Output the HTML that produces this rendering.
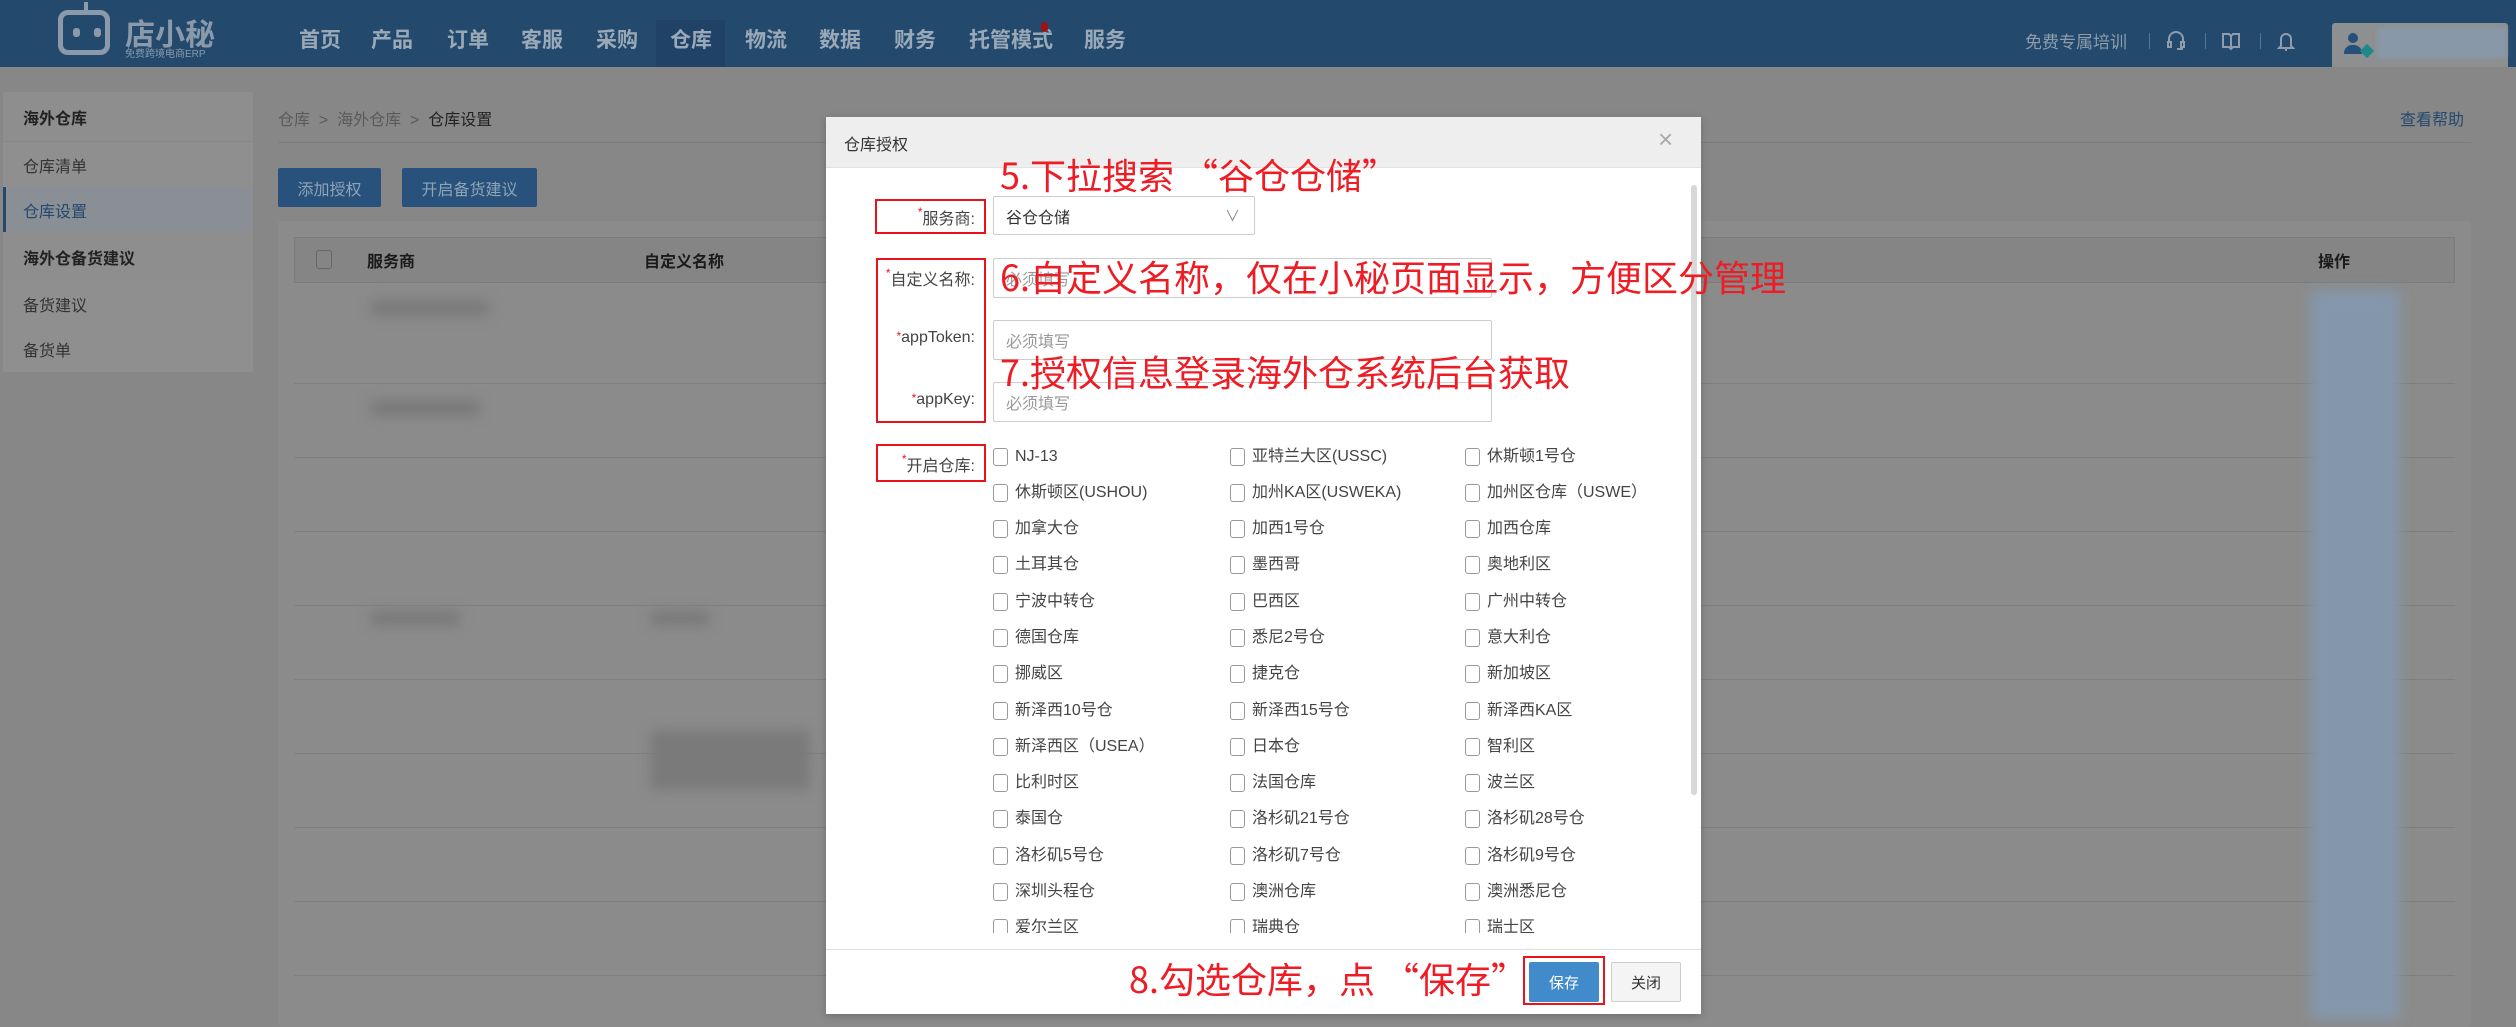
<!DOCTYPE html>
<html><head><meta charset="utf-8"><style>
*{margin:0;padding:0;box-sizing:border-box}
body{width:2516px;height:1027px;overflow:hidden;background:#878787;font-family:"Liberation Sans","Noto Sans CJK SC",sans-serif;position:relative;color:#333}
.a{position:absolute}
.nav{top:24px;font-size:21px;color:#9aa9b8;font-weight:bold}
.sb div{position:absolute;left:0;width:250px;padding-left:20px;font-size:16px;display:flex;align-items:center}
.cb{position:absolute;font-size:16px;color:#444;display:flex;align-items:center;white-space:nowrap;height:22px;line-height:22px}
.cb i{display:inline-block;width:15px;height:18px;border:1.5px solid #999;border-radius:3px;margin-right:7px}
.red{position:absolute;border:2px solid #e8141c}
.ann{position:absolute;color:#ee1c24;font-size:36px;white-space:nowrap;line-height:1;font-family:"Noto Sans CJK SC","Liberation Sans",sans-serif}
.inp{position:absolute;border:1px solid #ccc;border-radius:2px;background:#fff;font-size:16px;color:#999;padding-left:12px;display:flex;align-items:center}
.lbl{position:absolute;font-size:16px;color:#444;text-align:right;width:100px}
.lbl b{color:#e8141c;font-weight:normal;font-size:12px;vertical-align:top}
.row{position:absolute;left:294px;width:2161px;height:1px;background:#7f7f7f}
.blob{position:absolute;background:#7a7a7a;filter:blur(6px);border-radius:6px}
</style></head><body>
<div class="a" style="left:0;top:0;width:2516px;height:67px;background:#23496d"></div>
<div class="a" style="left:58px;top:10px;width:52px;height:45px;border:5px solid #8a9aab;border-radius:10px"></div>
<div class="a" style="left:84px;top:2px;width:4px;height:10px;background:#8a9aab"></div>
<div class="a" style="left:73px;top:28px;width:7px;height:9px;background:#8a9aab;border-radius:3px"></div>
<div class="a" style="left:94px;top:28px;width:7px;height:9px;background:#8a9aab;border-radius:3px"></div>
<div class="a" style="left:125px;top:10px;font-size:30px;color:#8a9aab;font-weight:bold">店小秘</div>
<div class="a" style="left:125px;top:45px;font-size:10px;color:#8a9aab">免费跨境电商ERP</div>
<div class="a" style="left:656px;top:20px;width:69px;height:47px;background:#1f4266"></div>
<div class="a nav" style="left:299px">首页</div>
<div class="a nav" style="left:371px">产品</div>
<div class="a nav" style="left:447px">订单</div>
<div class="a nav" style="left:521px">客服</div>
<div class="a nav" style="left:596px">采购</div>
<div class="a nav" style="left:670px">仓库</div>
<div class="a nav" style="left:745px">物流</div>
<div class="a nav" style="left:819px">数据</div>
<div class="a nav" style="left:894px">财务</div>
<div class="a nav" style="left:969px">托管模式</div>
<div class="a" style="left:1041px;top:22px;width:7px;height:10px;border-radius:4px;background:#a01018"></div>
<div class="a nav" style="left:1084px">服务</div>
<div class="a" style="left:2025px;top:28px;font-size:17px;color:#8e9cab">免费专属培训</div>
<div class="a" style="left:2149px;top:33px;width:1px;height:16px;background:#5a7590"></div>
<div class="a" style="left:2205px;top:33px;width:1px;height:16px;background:#5a7590"></div>
<div class="a" style="left:2260px;top:33px;width:1px;height:16px;background:#5a7590"></div>
<svg class="a" style="left:2166px;top:30px" width="20" height="22" viewBox="0 0 20 22" fill="none" stroke="#8e9cab" stroke-width="2"><path d="M3 12V9a7 7 0 0 1 14 0v3"/><rect x="2" y="12" width="3" height="5"/><rect x="15" y="12" width="3" height="5"/><path d="M16 17v2h-5"/></svg>
<svg class="a" style="left:2221px;top:31px" width="20" height="20" viewBox="0 0 20 20" fill="none" stroke="#8e9cab" stroke-width="2"><path d="M2 3h6l2 2 2-2h6v13h-6l-2 2-2-2H2z"/><path d="M10 5v13"/></svg>
<svg class="a" style="left:2277px;top:30px" width="18" height="22" viewBox="0 0 18 22" fill="none" stroke="#8e9cab" stroke-width="2"><path d="M4 16V9a5 5 0 0 1 10 0v7l2 2H2z"/><path d="M8 20h2"/></svg>
<div class="a" style="left:2332px;top:23px;width:176px;height:44px;background:#8d8f91;border-radius:3px 3px 0 0"></div>
<div class="a" style="left:2377px;top:27px;width:129px;height:31px;background:#8898a8;filter:blur(2px)"></div>
<div class="a" style="left:2348px;top:33px;width:10px;height:10px;border-radius:50%;background:#24507a"></div>
<div class="a" style="left:2344px;top:45px;width:18px;height:9px;border-radius:8px 8px 0 0;background:#24507a"></div>
<div class="a" style="left:2362px;top:46px;width:10px;height:10px;background:#1c8a8a;transform:rotate(45deg)"></div>

<div class="sb">
<div style="left:3px;top:92px;height:49px;background:#8e8e8e;font-weight:bold;color:#222">海外仓库</div>
<div style="left:3px;top:142px;height:45px;background:#8f8f8f;color:#333">仓库清单</div>
<div style="left:3px;top:187px;height:45px;background:#8a8f95;color:#23496d;border-left:3px solid #23496d;padding-left:17px">仓库设置</div>
<div style="left:3px;top:232px;height:49px;background:#8e8e8e;font-weight:bold;color:#222">海外仓备货建议</div>
<div style="left:3px;top:281px;height:45px;background:#8f8f8f;color:#333">备货建议</div>
<div style="left:3px;top:326px;height:46px;background:#8f8f8f;color:#333">备货单</div>
</div>

<div class="a" style="left:278px;top:106px;font-size:16px;color:#5a5a5a">仓库 &nbsp;&gt;&nbsp; 海外仓库 &nbsp;&gt;&nbsp; <span style="color:#222">仓库设置</span></div>
<div class="a" style="left:2400px;top:106px;font-size:16px;color:#23496d">查看帮助</div>
<div class="a" style="left:278px;top:142px;width:2193px;height:1px;background:#7c7c7c"></div>
<div class="a" style="left:278px;top:168px;width:103px;height:39px;background:#28527c;border-radius:2px;color:#8fa3b7;font-size:16px;display:flex;align-items:center;justify-content:center">添加授权</div>
<div class="a" style="left:402px;top:168px;width:135px;height:39px;background:#28527c;border-radius:2px;color:#8fa3b7;font-size:16px;display:flex;align-items:center;justify-content:center">开启备货建议</div>
<div class="a" style="left:278px;top:221px;width:2193px;height:806px;background:#8b8b8b;border-radius:4px"></div>
<div class="a" style="left:294px;top:237px;width:2161px;height:46px;background:#858585;border:1px solid #7c7c7c"></div>
<div class="a" style="left:316px;top:250px;width:16px;height:19px;border:1.5px solid #666;border-radius:3px"></div>
<div class="a" style="left:367px;top:248px;font-size:16px;font-weight:bold;color:#1a1a1a">服务商</div>
<div class="a" style="left:644px;top:248px;font-size:16px;font-weight:bold;color:#1a1a1a">自定义名称</div>
<div class="a" style="left:2318px;top:248px;font-size:16px;font-weight:bold;color:#1a1a1a">操作</div>
<div class="row" style="top:383px"></div><div class="row" style="top:457px"></div><div class="row" style="top:531px"></div><div class="row" style="top:605px"></div><div class="row" style="top:679px"></div><div class="row" style="top:753px"></div><div class="row" style="top:827px"></div><div class="row" style="top:901px"></div><div class="row" style="top:975px"></div>
<div class="blob" style="left:370px;top:300px;width:120px;height:16px"></div>
<div class="blob" style="left:370px;top:400px;width:110px;height:16px"></div>
<div class="blob" style="left:370px;top:610px;width:90px;height:16px"></div>
<div class="blob" style="left:650px;top:610px;width:60px;height:16px"></div>
<div class="blob" style="left:650px;top:730px;width:160px;height:60px"></div>
<div class="blob" style="left:2310px;top:290px;width:90px;height:730px;background:#8497aa"></div>

<div class="a" style="left:826px;top:117px;width:875px;height:897px;background:#fff;box-shadow:0 2px 8px rgba(0,0,0,.2)"></div>
<div class="a" style="left:826px;top:117px;width:875px;height:51px;background:#eeeeee;border-bottom:1px solid #e2e2e2"></div>
<div class="a" style="left:844px;top:131px;font-size:16px;color:#333">仓库授权</div>
<div class="a" style="left:1658px;top:124px;font-size:26px;color:#aaa;font-weight:300">×</div>
<div class="a" style="left:1691px;top:185px;width:6px;height:610px;background:#d8d8d8;border-radius:3px"></div>

<div class="lbl" style="left:875px;top:205px"><b>*</b>服务商:</div>
<div class="inp" style="left:993px;top:196px;width:262px;height:39px;color:#333">谷仓仓储<span style="position:absolute;right:14px;color:#888;font-size:15px">∨</span></div>
<div class="lbl" style="left:875px;top:266px"><b>*</b>自定义名称:</div>
<div class="inp" style="left:993px;top:258px;width:499px;height:40px">必须填写</div>
<div class="lbl" style="left:875px;top:329px"><b>*</b>appToken:</div>
<div class="inp" style="left:993px;top:320px;width:499px;height:40px">必须填写</div>
<div class="lbl" style="left:875px;top:391px"><b>*</b>appKey:</div>
<div class="inp" style="left:993px;top:382px;width:499px;height:40px">必须填写</div>
<div class="lbl" style="left:875px;top:452px"><b>*</b>开启仓库:</div>
<div class="red" style="left:875px;top:199px;width:111px;height:35px"></div>
<div class="red" style="left:876px;top:258px;width:110px;height:165px"></div>
<div class="red" style="left:876px;top:444px;width:110px;height:38px"></div>

<div class="a" style="left:826px;top:440px;width:865px;height:493px;overflow:hidden">
<div style="position:relative;top:-440px;left:-826px">
<div class="cb" style="left:993px;top:446px"><i></i>NJ-13</div><div class="cb" style="left:1230px;top:446px"><i></i>亚特兰大区(USSC)</div><div class="cb" style="left:1465px;top:446px"><i></i>休斯顿1号仓</div>
<div class="cb" style="left:993px;top:482px"><i></i>休斯顿区(USHOU)</div><div class="cb" style="left:1230px;top:482px"><i></i>加州KA区(USWEKA)</div><div class="cb" style="left:1465px;top:482px"><i></i>加州区仓库（USWE）</div>
<div class="cb" style="left:993px;top:518px"><i></i>加拿大仓</div><div class="cb" style="left:1230px;top:518px"><i></i>加西1号仓</div><div class="cb" style="left:1465px;top:518px"><i></i>加西仓库</div>
<div class="cb" style="left:993px;top:554px"><i></i>土耳其仓</div><div class="cb" style="left:1230px;top:554px"><i></i>墨西哥</div><div class="cb" style="left:1465px;top:554px"><i></i>奥地利区</div>
<div class="cb" style="left:993px;top:591px"><i></i>宁波中转仓</div><div class="cb" style="left:1230px;top:591px"><i></i>巴西区</div><div class="cb" style="left:1465px;top:591px"><i></i>广州中转仓</div>
<div class="cb" style="left:993px;top:627px"><i></i>德国仓库</div><div class="cb" style="left:1230px;top:627px"><i></i>悉尼2号仓</div><div class="cb" style="left:1465px;top:627px"><i></i>意大利仓</div>
<div class="cb" style="left:993px;top:663px"><i></i>挪威区</div><div class="cb" style="left:1230px;top:663px"><i></i>捷克仓</div><div class="cb" style="left:1465px;top:663px"><i></i>新加坡区</div>
<div class="cb" style="left:993px;top:700px"><i></i>新泽西10号仓</div><div class="cb" style="left:1230px;top:700px"><i></i>新泽西15号仓</div><div class="cb" style="left:1465px;top:700px"><i></i>新泽西KA区</div>
<div class="cb" style="left:993px;top:736px"><i></i>新泽西区（USEA）</div><div class="cb" style="left:1230px;top:736px"><i></i>日本仓</div><div class="cb" style="left:1465px;top:736px"><i></i>智利区</div>
<div class="cb" style="left:993px;top:772px"><i></i>比利时区</div><div class="cb" style="left:1230px;top:772px"><i></i>法国仓库</div><div class="cb" style="left:1465px;top:772px"><i></i>波兰区</div>
<div class="cb" style="left:993px;top:808px"><i></i>泰国仓</div><div class="cb" style="left:1230px;top:808px"><i></i>洛杉矶21号仓</div><div class="cb" style="left:1465px;top:808px"><i></i>洛杉矶28号仓</div>
<div class="cb" style="left:993px;top:845px"><i></i>洛杉矶5号仓</div><div class="cb" style="left:1230px;top:845px"><i></i>洛杉矶7号仓</div><div class="cb" style="left:1465px;top:845px"><i></i>洛杉矶9号仓</div>
<div class="cb" style="left:993px;top:881px"><i></i>深圳头程仓</div><div class="cb" style="left:1230px;top:881px"><i></i>澳洲仓库</div><div class="cb" style="left:1465px;top:881px"><i></i>澳洲悉尼仓</div>
<div class="cb" style="left:993px;top:917px"><i></i>爱尔兰区</div><div class="cb" style="left:1230px;top:917px"><i></i>瑞典仓</div><div class="cb" style="left:1465px;top:917px"><i></i>瑞士区</div>
</div></div>

<div class="a" style="left:826px;top:949px;width:875px;height:1px;background:#ddd"></div>
<div class="a" style="left:1529px;top:962px;width:70px;height:40px;background:#428bca;border-radius:2px;color:#fff;font-size:15px;display:flex;align-items:center;justify-content:center">保存</div>
<div class="red" style="left:1523px;top:956px;width:82px;height:49px"></div>
<div class="a" style="left:1611px;top:962px;width:70px;height:40px;background:#f4f4f4;border:1px solid #ccc;border-radius:2px;color:#333;font-size:15px;display:flex;align-items:center;justify-content:center">关闭</div>

<div class="ann" style="left:1000px;top:156px">5.下拉搜索 “谷仓仓储”</div>
<div class="ann" style="left:1000px;top:258px">6.自定义名称，仅在小秘页面显示，方便区分管理</div>
<div class="ann" style="left:1000px;top:353px">7.授权信息登录海外仓系统后台获取</div>
<div class="ann" style="left:1129px;top:960px">8.勾选仓库，点 “保存”</div>
</body></html>
